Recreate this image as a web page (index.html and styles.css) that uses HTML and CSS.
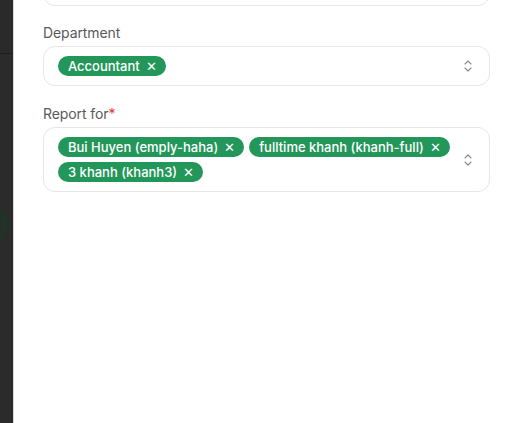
FILE: index.html
```html
<!DOCTYPE html>
<html>
<head>
<meta charset="utf-8">
<link rel="stylesheet" href="styles.css">
</head>
<body>
<div class="app">
  <aside class="backdrop">
    <div class="backdrop-top"></div>
    <div class="backdrop-ring"></div>
  </aside>
  <main class="panel">
    <div class="form">
      <div class="field field-first">
        <div class="box box-top"></div>
      </div>
      <div class="field">
        <label class="label">Department</label>
        <div class="box">
          <div class="tags">
            <span class="tag">Accountant<span class="x">✕</span></span>
          </div>
          <svg class="chev" width="10" height="14" viewBox="0 0 10 14"><path d="M2 5 L5 2 L8 5 M2 9 L5 12 L8 9" fill="none" stroke="#8a8a8a" stroke-width="1.1" stroke-linecap="round" stroke-linejoin="round"/></svg>
        </div>
      </div>
      <div class="field">
        <label class="label">Report for<span class="req">*</span></label>
        <div class="box">
          <div class="tags">
            <span class="tag">Bui Huyen (emply-haha)<span class="x">✕</span></span>
            <span class="tag">fulltime khanh (khanh-full)<span class="x">✕</span></span>
            <span class="tag">3 khanh (khanh3)<span class="x">✕</span></span>
          </div>
          <svg class="chev" width="10" height="14" viewBox="0 0 10 14"><path d="M2 5 L5 2 L8 5 M2 9 L5 12 L8 9" fill="none" stroke="#8a8a8a" stroke-width="1.1" stroke-linecap="round" stroke-linejoin="round"/></svg>
        </div>
      </div>
    </div>
  </main>
</div>
</body>
</html>
```

FILE: styles.css
```css
* { box-sizing: border-box; }
html, body { margin: 0; padding: 0; height: 100%; }
body { font-family: Inter, "Noto Sans", sans-serif; background: #fff; overflow: hidden; }
.app { display: flex; height: 423px; }
.backdrop {
  width: 14px; flex: none; background: #2b2b2b; position: relative; overflow: hidden;
  border-right: 1px solid #d9d9d9;
}
.backdrop-top { height: 54px; border-bottom: 1px solid #1d1f1e; background: #2a2a2a; }
.backdrop-ring {
  position: absolute; left: -28px; top: 207px; width: 35px; height: 35px;
  border-radius: 50%; border: 3px solid #173a27;
}
.panel { flex: 1; padding: 0 21px 0 29px; }
.form { display: flex; flex-direction: column; gap: 19px; }
.field { display: flex; flex-direction: column; gap: 5px; }
.field-first { margin-top: -34px; margin-bottom: -1px; }
.label { font-size: 14px; color: #5a5a5a; line-height: 17px; letter-spacing: -0.1px; }
.req { color: #e5322d; }
.box {
  border: 1px solid #e6e6e6; border-radius: 12px; background: #fff;
  display: flex; align-items: center; padding: 9px 16px 9px 14px; min-height: 40px;
}
.box-top { height: 40px; }
.tags { flex: 1; display: flex; flex-wrap: wrap; gap: 5px 5px; }
.tag {
  display: inline-flex; align-items: center; height: 20px; padding: 0 9px 0 10px;
  background: #23965a; color: #fff; border-radius: 10px; font-size: 13px;
  font-weight: 500; letter-spacing: 0; white-space: pre;
}
.x { font-size: 13px; margin-left: 6px; font-weight: 400; }
.chev { flex: none; margin-left: 8px; }
```
